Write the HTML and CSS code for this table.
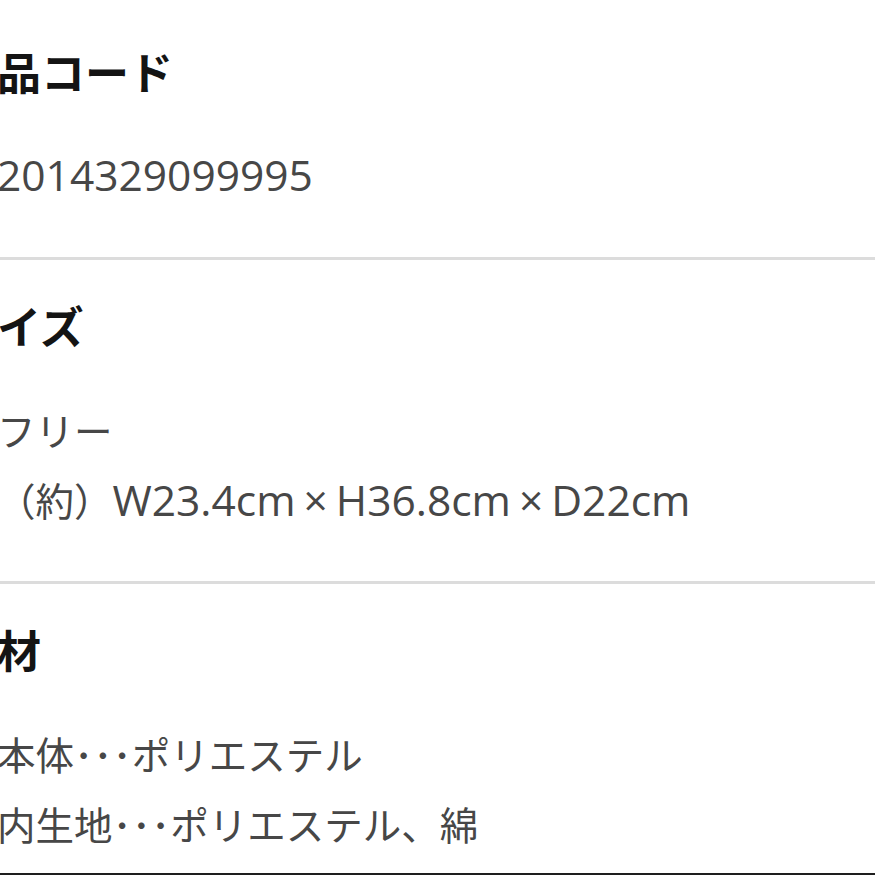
FILE: index.html
```html
<!DOCTYPE html>
<html lang="ja">
<head>
<meta charset="utf-8">
<title>商品詳細</title>
<link rel="stylesheet" href="styles.css">
</head>
<body>
<div class="spec">
  <section class="item">
    <h2 class="label">商品コード</h2>
    <div class="value">
      <p class="line">2014329099995</p>
    </div>
  </section>
  <section class="item">
    <h2 class="label">サイズ</h2>
    <div class="value">
      <p class="line"><span class="ja">フリー</span></p>
      <p class="line"><span class="ja">（約）</span>W23.4cm<span class="times">×</span>H36.8cm<span class="times">×</span>D22cm</p>
    </div>
  </section>
  <section class="item last">
    <h2 class="label">素材</h2>
    <div class="value">
      <p class="line"><span class="ja">本体･･･ポリエステル</span></p>
      <p class="line"><span class="ja">内生地･･･ポリエステル、綿</span></p>
    </div>
  </section>
</div>
</body>
</html>
```
FILE: styles.css
```css
html, body {
  margin: 0;
  padding: 0;
  background: #ffffff;
}

body {
  overflow: hidden;
  width: 875px;
  height: 875px;
}

.spec {
  margin-left: -47px;
  padding-top: 6px;
  display: flex;
  flex-direction: column;
}

.item {
  display: flex;
  flex-direction: column;
  gap: 39px;
  padding: 35px 0 47px;
  border-bottom: 3px solid #dcdcdc;
}

.item.last {
  padding-bottom: 15px;
  border-bottom: 2px solid #1e1e1e;
}

.label {
  margin: 0;
  height: 60px;
  font-family: "Noto Sans CJK JP", sans-serif;
  font-weight: 700;
  font-size: 44px;
  line-height: 60px;
  color: #141414;
  white-space: nowrap;
}

.value {
  padding-left: 44px;
  display: flex;
  flex-direction: column;
}

.line {
  margin: 0;
  height: 70px;
  font-family: "Open Sans", "Noto Sans CJK JP", sans-serif;
  font-size: 42.5px;
  line-height: 70px;
  color: #474747;
  white-space: nowrap;
}

.ja {
  font-family: "Noto Sans CJK JP", sans-serif;
  font-size: 38.5px;
}

.times {
  margin: 0 8px;
}
```
